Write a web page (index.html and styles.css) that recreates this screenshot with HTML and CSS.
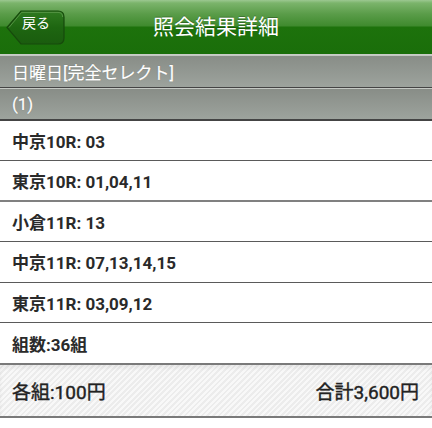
FILE: index.html
```html
<!DOCTYPE html>
<html lang="ja">
<head>
<meta charset="utf-8">
<title>照会結果詳細</title>
<link rel="stylesheet" href="styles.css">
</head>
<body>
<header class="topbar">
  <a class="back" href="#">
    <svg class="back-shape" width="59" height="35" viewBox="0 0 59 35">
      <defs>
        <linearGradient id="bg" x1="0" y1="0" x2="0" y2="1">
          <stop offset="0" stop-color="#2f7a20"/>
          <stop offset="0.5" stop-color="#1e6611"/>
          <stop offset="1" stop-color="#1a5c0e"/>
        </linearGradient>
      </defs>
      <path d="M1 17.5 L15 1 H52 Q58 1 58 7 V28 Q58 34 52 34 H15 Z" fill="url(#bg)" stroke="#174a0c" stroke-width="1.2"/>
      <path d="M3 17.5 L15.6 2.4 H52 Q56.6 2.4 56.6 7" fill="none" stroke="#5e9a4e" stroke-width="0.8"/>
    </svg>
    <span class="back-label">戻る</span>
  </a>
  <h1 class="title">照会結果詳細</h1>
</header>
<div class="band">日曜日[完全セレクト]</div>
<div class="band">(1)</div>
<ul class="rows">
  <li class="row">中京10R: 03</li>
  <li class="row">東京10R: 01,04,11</li>
  <li class="row">小倉11R: 13</li>
  <li class="row">中京11R: 07,13,14,15</li>
  <li class="row">東京11R: 03,09,12</li>
  <li class="row">組数:36組</li>
</ul>
<footer class="total">
  <span>各組:100円</span>
  <span>合計3,600円</span>
</footer>
</body>
</html>
```
FILE: styles.css
```css
html, body {
  margin: 0;
  padding: 0;
  background: #fff;
}
body {
  width: 432px;
  font-family: Roboto, "Noto Sans CJK JP", sans-serif;
  color: #222;
}
.topbar {
  position: relative;
  height: 54px;
  display: flex;
  align-items: center;
  justify-content: center;
  background: linear-gradient(to bottom, #9cc891 0px, #7bb46b 3px, #5a9c49 14px, #3f8a2e 26px, #1d720c 27px, #1a6e0a 54px);
  border-bottom: 1px solid #c9cdc8;
}
.back {
  position: absolute;
  left: 6px;
  top: 10px;
  width: 59px;
  height: 35px;
  text-decoration: none;
}
.back-shape {
  position: absolute;
  left: 0;
  top: 0;
}
.back-label {
  position: absolute;
  left: 16px;
  top: 3px;
  font-size: 14px;
  color: #fff;
  line-height: 18px;
  font-family: "Noto Sans CJK JP", sans-serif;
}
.title {
  margin: 0;
  font-size: 21px;
  font-weight: normal;
  color: #fff;
  line-height: 24px;
  font-family: "Noto Sans CJK JP", sans-serif;
  text-shadow: 0 -1px 0 rgba(0,0,0,0.25);
  margin-top: -4px;
}
.band {
  height: 31px;
  box-sizing: content-box;
  padding-left: 12px;
  display: flex;
  align-items: center;
  font-size: 17px;
  color: #fff;
  background: linear-gradient(to bottom, #888d87, #9da39d);
  border-bottom: 1px solid #444;
  border-top: 1px solid #c4c8c3;
  text-shadow: 0 0 1px rgba(0,0,0,0.35);
  -webkit-text-stroke: 0.2px #fff;
}
.band + .band {
  height: 30px;
  border-bottom: 2px solid #444;
}
.rows {
  list-style: none;
  margin: 0;
  padding: 0;
}
.row {
  height: 40.4px;
  box-sizing: border-box;
  padding-left: 12px;
  display: flex;
  align-items: center;
  font-size: 17px;
  font-weight: bold;
  color: #2a2a2a;
  border-bottom: 1px solid #5a5a5a;
}
.row:nth-child(2) {
  border-bottom: 2px solid #808080;
}
.row:last-child {
  border-bottom: none;
}
.total {
  height: 51px;
  display: flex;
  align-items: center;
  justify-content: space-between;
  padding: 0 13px 0 12px;
  font-size: 19px;
  color: #222;
  border-top: 2px solid #7a7a7a;
  border-bottom: 2px solid #7a7a7a;
  background-color: #f1f1f1;
  background-image: repeating-linear-gradient(-45deg, #f8f8f8 0px, #f8f8f8 2px, #ececec 2px, #ececec 4px);
  box-shadow: inset 0 3px 4px rgba(0,0,0,0.06);
  -webkit-text-stroke: 0.4px #222;
}
```
